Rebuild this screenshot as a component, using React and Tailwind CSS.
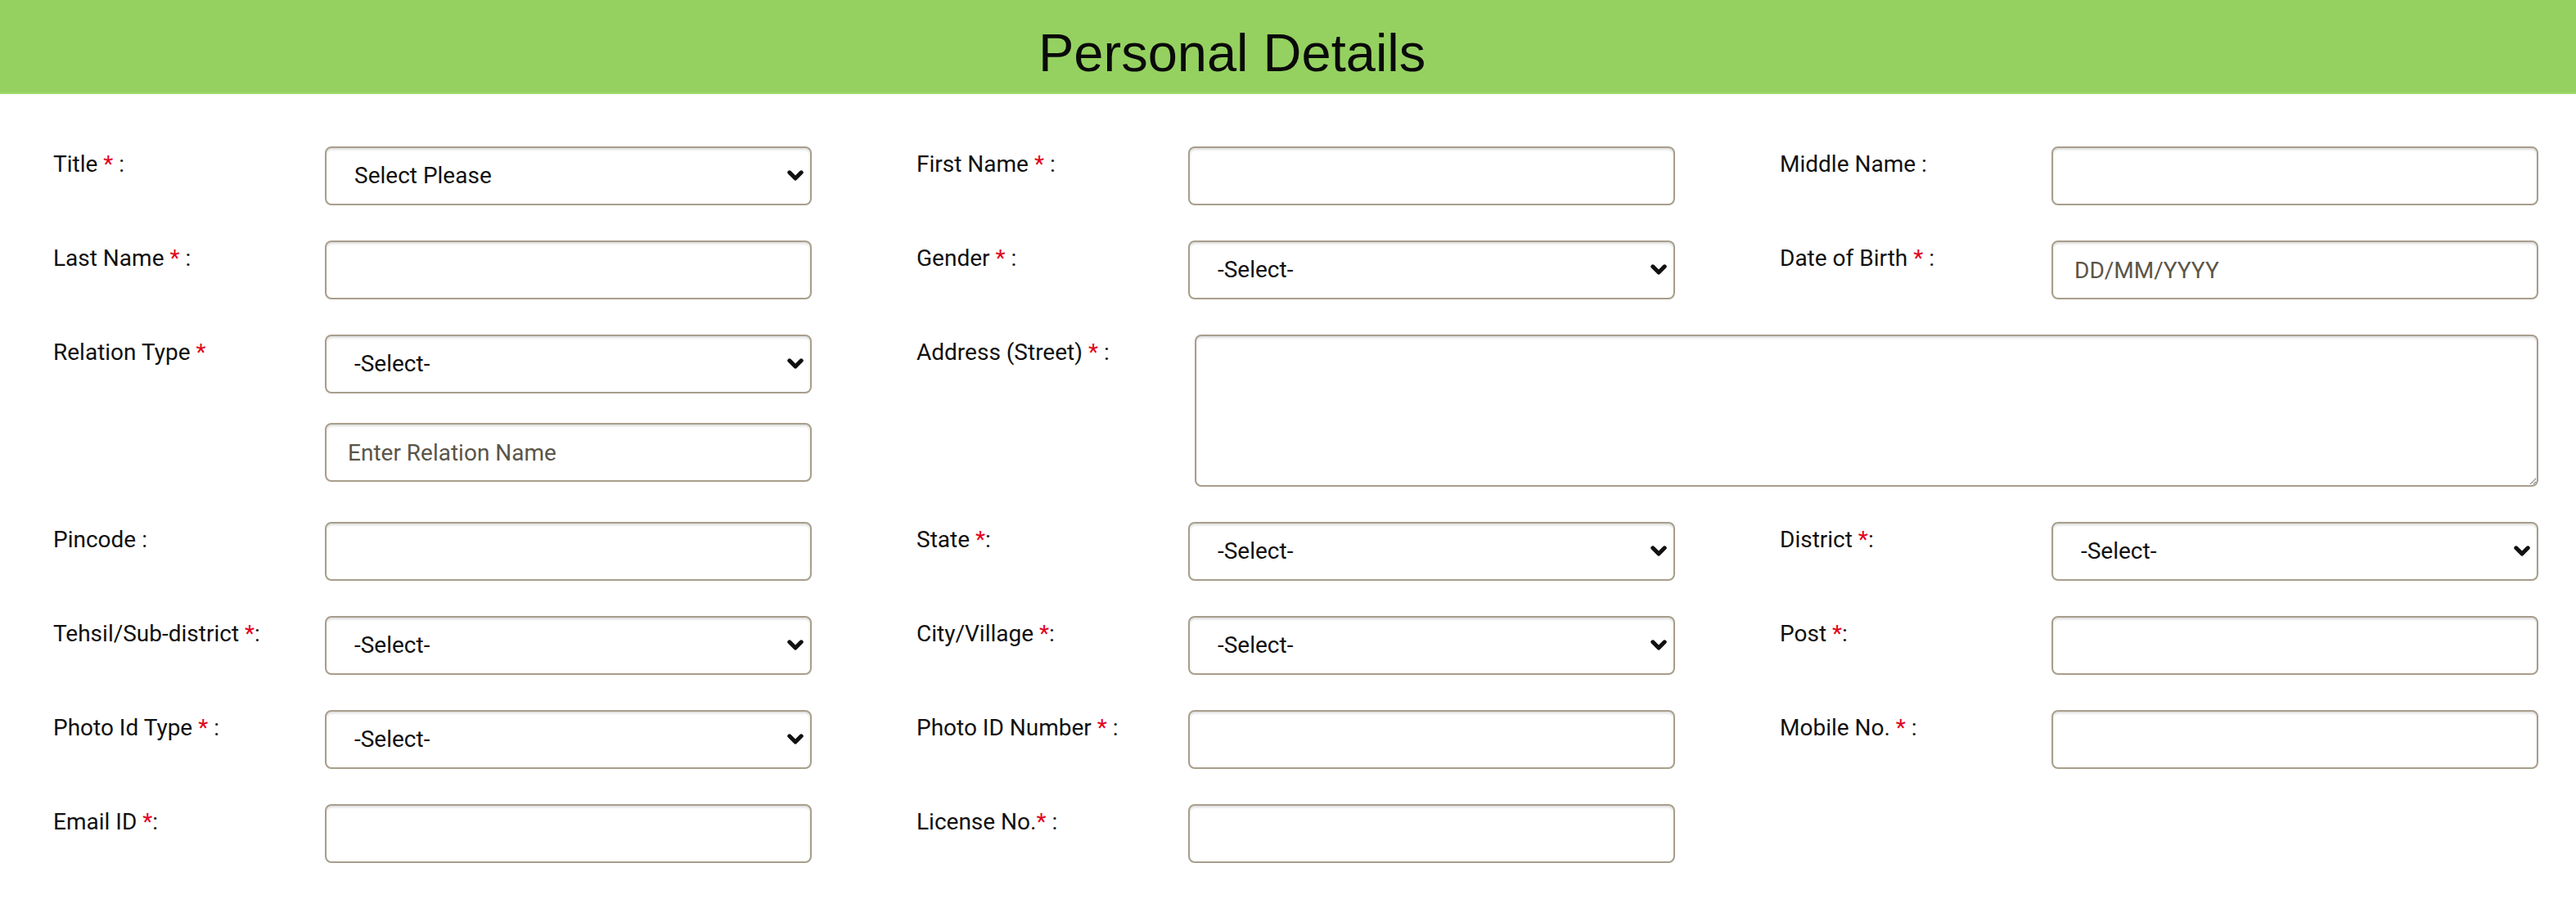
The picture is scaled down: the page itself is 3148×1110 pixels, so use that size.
import React from "react";

const FONT = { fontFamily: "Roboto, 'Liberation Sans', Arial, sans-serif" };

const Req = () => <span className="text-[#e3001b]">*</span>;

function Label({ children, w = "w-[332px]" }) {
  return (
    <div className={`${w} shrink-0 text-[28px] leading-[44px] text-[#111111]`}>
      {children}
    </div>
  );
}

const fieldBase =
  "h-[72px] w-[595px] rounded-[8px] border-2 border-[#a89e8c] bg-white text-[28px] text-[#111111] shadow-[inset_0_2px_3px_rgba(0,0,0,0.14)] outline-none";

function TextInput({ placeholder }) {
  return (
    <input
      type="text"
      placeholder={placeholder}
      className={`${fieldBase} px-[26px] placeholder:text-[#5b5548]`}
      style={FONT}
    />
  );
}

function Select({ text = "-Select-" }) {
  return (
    <div className="relative w-[595px]">
      <select
        className={`${fieldBase} appearance-none pl-[34px] pr-[40px]`}
        style={FONT}
        defaultValue="x"
      >
        <option value="x">{text}</option>
      </select>
      <svg
        className="pointer-events-none absolute right-[10px] top-[29px]"
        width="20"
        height="13"
        viewBox="0 0 20 13"
      >
        <path
          d="M2.8 2.8 L10 10 L17.2 2.8"
          fill="none"
          stroke="#111"
          strokeWidth="5"
          strokeLinecap="round"
          strokeLinejoin="round"
        />
      </svg>
    </div>
  );
}

function Cell({ label, children, last }) {
  return (
    <div className={`flex ${last ? "" : "w-[1055px]"} shrink-0`}>
      <Label>{label}</Label>
      {children}
    </div>
  );
}

export default function App() {
  return (
    <div className="min-h-[1110px] w-[3148px] bg-white" style={FONT}>
      <div className="h-[115px] bg-[#95d160] border-b-2 border-[#9fdc6c]">
        <h1
          className="pl-[1269px] pt-[27px] text-[65px] leading-[75px] font-normal text-[#0a0a0a]"
          style={{ fontFamily: "'Liberation Sans', Arial, sans-serif" }}
        >
          Personal Details
        </h1>
      </div>

      <div className="flex flex-col gap-[43px] pl-[65px] pt-[64px]">
        <div className="flex">
          <Cell label={<>Title <Req /> :</>}>
            <Select text="Select Please" />
          </Cell>
          <Cell label={<>First Name <Req /> :</>}>
            <TextInput />
          </Cell>
          <Cell label={<>Middle Name :</>} last>
            <TextInput />
          </Cell>
        </div>

        <div className="flex">
          <Cell label={<>Last Name <Req /> :</>}>
            <TextInput />
          </Cell>
          <Cell label={<>Gender <Req /> :</>}>
            <Select />
          </Cell>
          <Cell label={<>Date of Birth <Req /> :</>} last>
            <TextInput placeholder="DD/MM/YYYY" />
          </Cell>
        </div>

        <div className="flex">
          <Cell label={<>Relation Type <Req /></>}>
            <div className="flex flex-col gap-[36px]">
              <Select />
              <TextInput placeholder="Enter Relation Name" />
            </div>
          </Cell>
          <div className="flex shrink-0">
            <Label w="w-[340px]">
              Address (Street) <Req /> :
            </Label>
            <textarea
              className="h-[186px] w-[1642px] rounded-[8px] border-2 border-[#a89e8c] bg-white px-[26px] py-[14px] text-[28px] shadow-[inset_0_2px_3px_rgba(0,0,0,0.14)] outline-none"
              style={FONT}
            />
          </div>
        </div>

        <div className="flex">
          <Cell label={<>Pincode :</>}>
            <TextInput />
          </Cell>
          <Cell label={<>State <Req />:</>}>
            <Select />
          </Cell>
          <Cell label={<>District <Req />:</>} last>
            <Select />
          </Cell>
        </div>

        <div className="flex">
          <Cell label={<>Tehsil/Sub-district <Req />:</>}>
            <Select />
          </Cell>
          <Cell label={<>City/Village <Req />:</>}>
            <Select />
          </Cell>
          <Cell label={<>Post <Req />:</>} last>
            <TextInput />
          </Cell>
        </div>

        <div className="flex">
          <Cell label={<>Photo Id Type <Req /> :</>}>
            <Select />
          </Cell>
          <Cell label={<>Photo ID Number <Req /> :</>}>
            <TextInput />
          </Cell>
          <Cell label={<>Mobile No. <Req /> :</>} last>
            <TextInput />
          </Cell>
        </div>

        <div className="flex">
          <Cell label={<>Email ID <Req />:</>}>
            <TextInput />
          </Cell>
          <Cell label={<>License No.<Req /> :</>}>
            <TextInput />
          </Cell>
        </div>
      </div>
    </div>
  );
}
